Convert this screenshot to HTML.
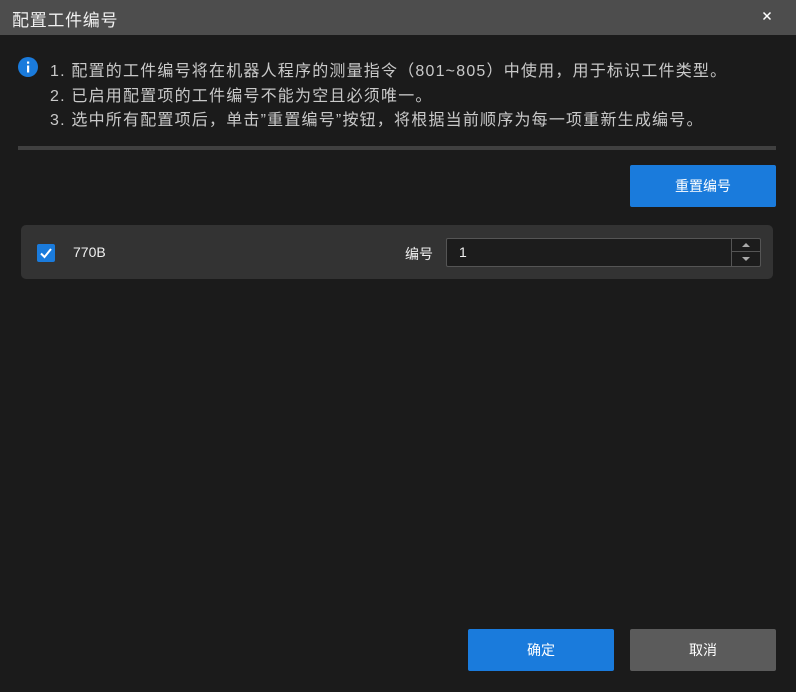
<!DOCTYPE html>
<html><head><meta charset="utf-8"><style>
*{margin:0;padding:0;box-sizing:border-box}
body{width:796px;height:692px;background:#1b1b1b;font-family:"Liberation Sans","Noto Sans CJK SC",sans-serif;position:relative;overflow:hidden;color:#e6e6e6}
.title{position:absolute;left:0;top:0;width:796px;height:35px;background:#4d4d4d;}
.title span{position:absolute;left:12px;top:6px;font-size:17px;letter-spacing:0.7px;color:#f0f0f0}
.x{position:absolute;left:761px;top:10px;width:12px;height:12px}
.info{position:absolute;left:18px;top:57px;width:20px;height:20px;border-radius:50%;background:#1a7bdc;color:#fff;font-weight:bold;font-size:14px;text-align:center;line-height:20px}
.txt{position:absolute;left:50px;top:60px;font-size:16px;line-height:24.5px;color:#c9c9c9;letter-spacing:1.2px;white-space:nowrap}
.sep{position:absolute;left:18px;top:146px;width:758px;height:4px;background:#404040}
.btn{position:absolute;height:42px;color:#fff;font-size:14px;text-align:center;line-height:42px;border-radius:2px}
.blue{background:#1a7bdc}
.gray{background:#5b5b5b}
.row{position:absolute;left:21px;top:225px;width:752px;height:54px;background:#333;border-radius:5px}
.cb{position:absolute;left:37px;top:244px;width:18px;height:18px;background:#1a7bdc;border-radius:2px}
.lbl{position:absolute;font-size:14px;color:#f0f0f0}
.inp{position:absolute;left:446px;top:238px;width:315px;height:29px;background:#1c1c1c;border:1px solid #555;border-radius:2px}
.sp{position:absolute;left:284px;top:0;width:29px;height:27px;border-left:1px solid #555}
.sp div{height:13px;border-bottom:1px solid #555}
</style></head><body>
<div class="title"><span>配置工件编号</span>
<svg class="x" viewBox="0 0 12 12"><path d="M2.5 2.5L9.5 9.5M9.5 2.5L2.5 9.5" stroke="#fff" stroke-width="1.5"/></svg></div>
<div class="info"><svg width="20" height="20"><rect x="9" y="8.5" width="2.2" height="7" fill="#fff"/><rect x="9" y="4.5" width="2.2" height="2.2" fill="#fff"/></svg></div>
<div class="txt">1. 配置的工件编号将在机器人程序的测量指令（801~805）中使用，用于标识工件类型。<br>2. 已启用配置项的工件编号不能为空且必须唯一。<br>3. 选中所有配置项后，单击”重置编号”按钮，将根据当前顺序为每一项重新生成编号。</div>
<div class="sep"></div>
<div class="btn blue" style="left:630px;top:165px;width:146px">重置编号</div>
<div class="row"></div>
<div class="cb"><svg width="18" height="18" viewBox="0 0 18 18"><path d="M4 9.5L7.5 13L14 5" stroke="#fff" stroke-width="2" fill="none"/></svg></div>
<div class="lbl" style="left:73px;top:244px">770B</div>
<div class="lbl" style="left:405px;top:244px">编号</div>
<div class="inp"><span class="lbl" style="left:12px;top:5px">1</span>
<div class="sp"><div><svg width="29" height="13"><path d="M10 8L14 4L18 8Z" fill="#aaa"/></svg></div>
<svg width="29" height="13"><path d="M10 5L14 9L18 5Z" fill="#aaa"/></svg></div></div>
<div class="btn blue" style="left:468px;top:629px;width:146px">确定</div>
<div class="btn gray" style="left:630px;top:629px;width:146px">取消</div>
</body></html>
